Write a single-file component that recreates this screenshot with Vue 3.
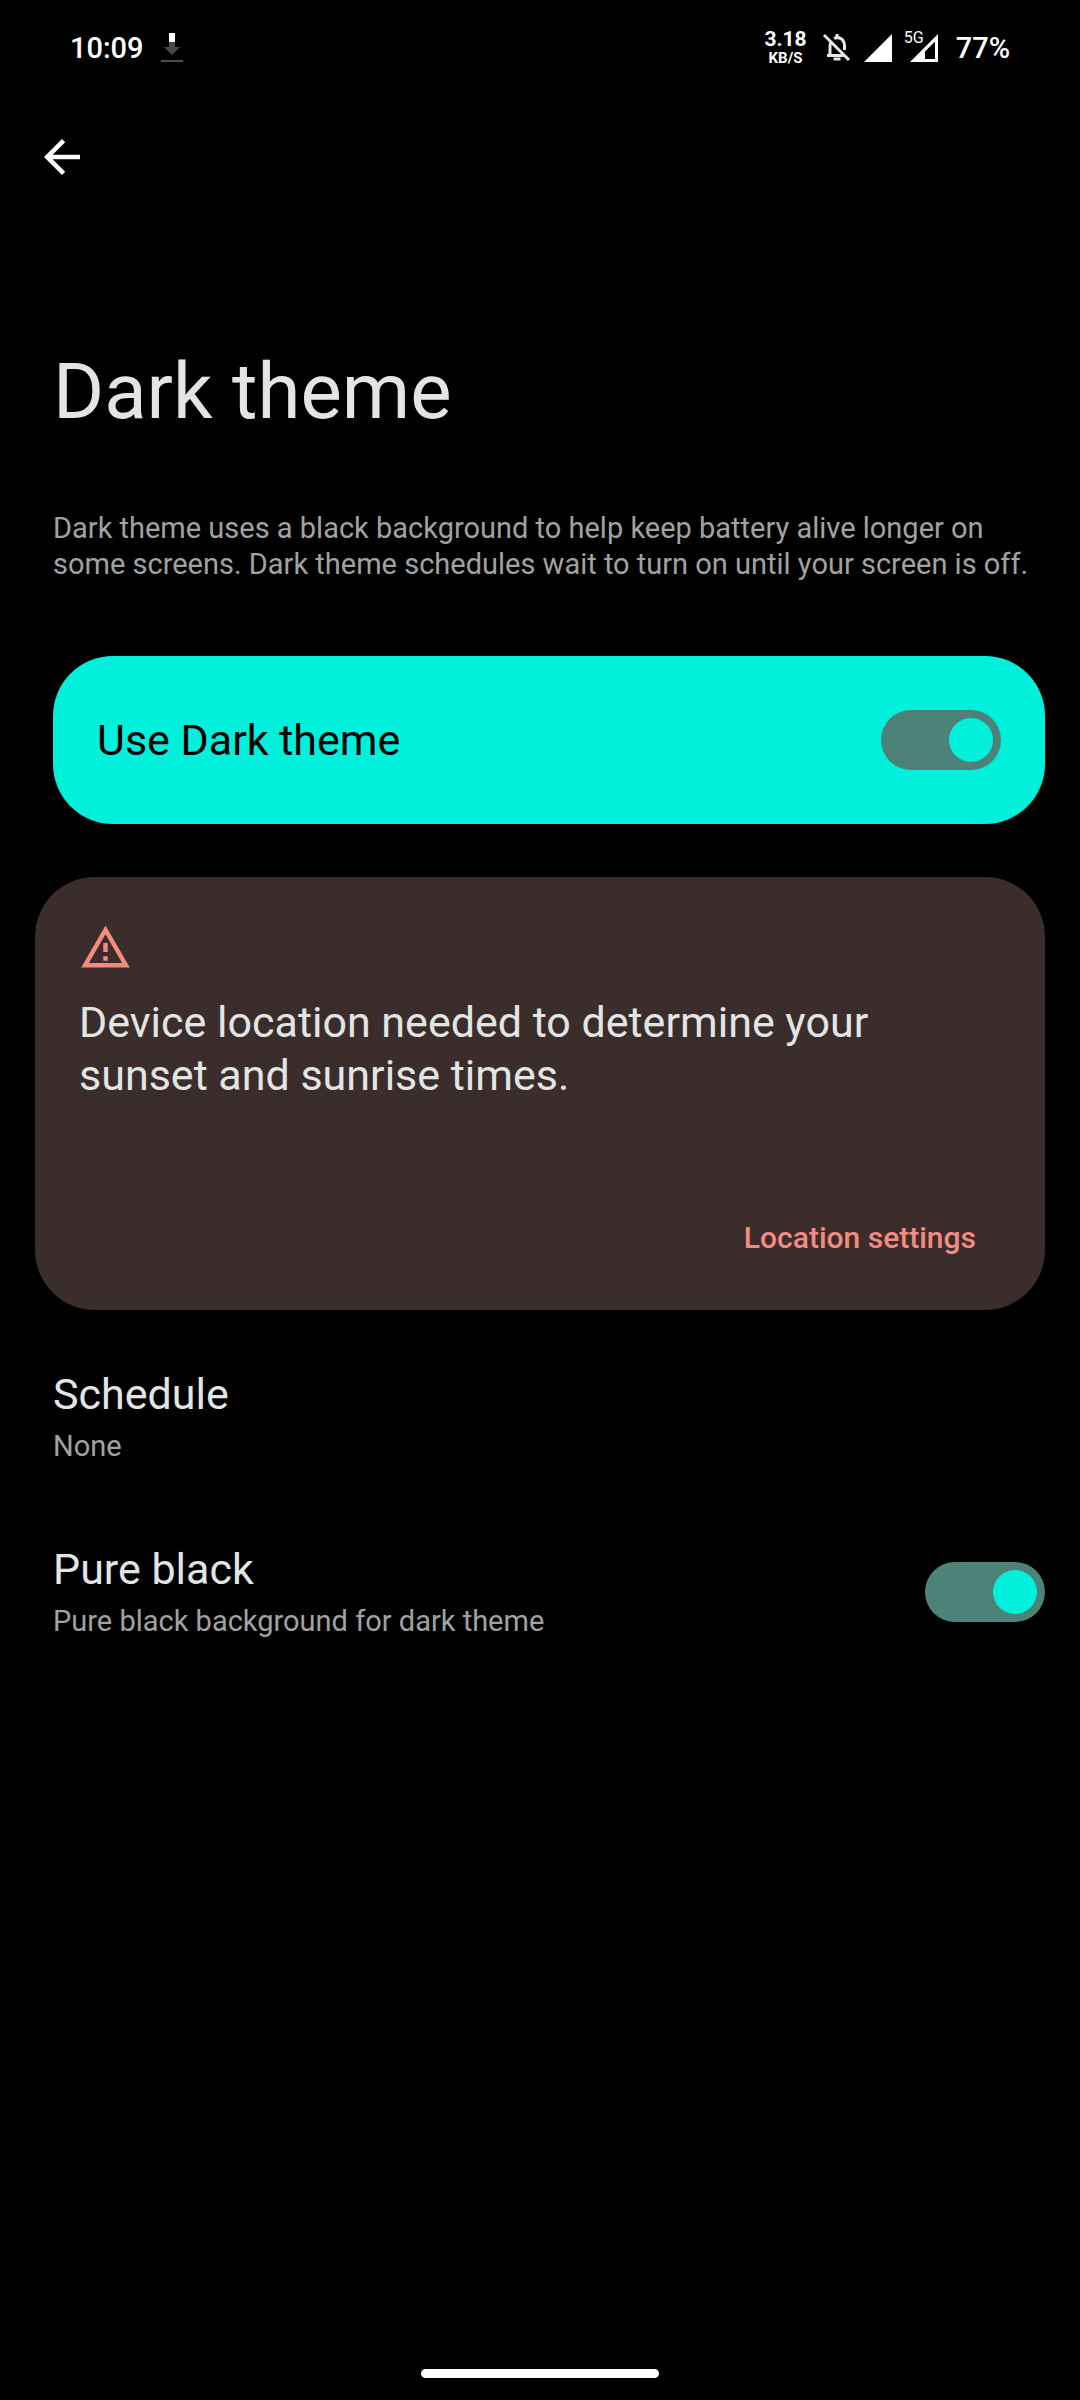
<script setup>
import { ref } from 'vue'

const darkTheme = ref(true)
const pureBlack = ref(true)
</script>

<template>
  <div class="screen">
    <header class="status-bar">
      <div class="status-group">
        <time class="status-text">10:09</time>
        <svg class="download" width="22" height="30" viewBox="0 0 22 30" aria-hidden="true">
          <path d="M8 9h6v5h5l-8 8-8-8h5z" fill="#4a4a4a" />
          <path d="M8 0h6v9H8z" fill="#fff" />
          <path d="M0 27h22v2H0z" fill="#4a4a4a" />
        </svg>
      </div>
      <div class="status-group">
        <div class="speed">
          <span class="speed-value">3.18</span>
          <span class="speed-unit">KB/S</span>
        </div>
        <svg class="bell" width="28" height="30" viewBox="0 0 28 30" fill="none" stroke="#e8e8e8" stroke-width="3" aria-hidden="true">
          <path d="M1 2l25 25" />
          <path d="M4 22.500h18M7 22V13c0-2 .6-3.600 1.600-5M11 5.500c5-2.500 10.500.8 10.500 7.500v4" />
          <path d="M14 1v4" />
          <path d="M10.500 26h7" />
        </svg>
        <svg class="signal" width="28" height="30" viewBox="0 0 28 30" aria-hidden="true">
          <path d="M28 1v28H0z" fill="#fff" />
        </svg>
        <div class="mobile">
          <span class="network">5G</span>
          <svg width="28" height="30" viewBox="0 0 28 30" aria-hidden="true">
            <path fill-rule="evenodd" d="M28 1v28H0zM25 8.500L15 18.500V26h10z" fill="#fff" />
          </svg>
        </div>
        <span class="status-text">77%</span>
      </div>
    </header>

    <nav class="toolbar">
      <button class="back" type="button" aria-label="Back">
        <svg width="54" height="54" viewBox="0 0 24 24" aria-hidden="true">
          <path d="M20 11H7.830l5.590-5.590L12 4l-8 8 8 8 1.410-1.410L7.830 13H20z" fill="#fff" />
        </svg>
      </button>
    </nav>

    <main class="content">
      <h1 class="title">Dark theme</h1>
      <p class="description">
        Dark theme uses a black background to help keep battery alive longer on
        some screens. Dark theme schedules wait to turn on until your screen is off.
      </p>

      <label class="main-switch">
        <span class="item-title">Use Dark theme</span>
        <input v-model="darkTheme" class="switch" type="checkbox" role="switch" />
      </label>

      <section class="notice">
        <svg class="warning" width="53" height="53" viewBox="0 0 24 24" aria-hidden="true">
          <path d="M12 5.990L19.530 19H4.470L12 5.990M12 2L1 21h22L12 2zm1 14h-2v2h2v-2zm0-6h-2v4h2v-4z" fill="#f48b81" />
        </svg>
        <p class="notice-text">Device location needed to determine your sunset and sunrise times.</p>
        <button class="notice-action" type="button">Location settings</button>
      </section>

      <button class="item" type="button">
        <span class="item-text">
          <span class="item-title">Schedule</span>
          <span class="item-summary">None</span>
        </span>
      </button>

      <label class="item">
        <span class="item-text">
          <span class="item-title">Pure black</span>
          <span class="item-summary">Pure black background for dark theme</span>
        </span>
        <input v-model="pureBlack" class="switch" type="checkbox" role="switch" />
      </label>
    </main>

    <footer class="gesture-bar"><span class="handle"></span></footer>
  </div>
</template>

<style>
body {
  background: #000;
}
</style>

<style scoped>
.screen {
  display: flex;
  flex-direction: column;
  box-sizing: border-box;
  min-height: 100vh;
  background: #000;
  color: #e1e6e5;
  font-family: Roboto, "Liberation Sans", sans-serif;
}

svg {
  display: block;
}

button {
  padding: 0;
  border: 0;
  background: none;
  color: inherit;
  font-family: inherit;
  text-align: left;
}

.status-bar {
  display: flex;
  align-items: center;
  justify-content: space-between;
  height: 96px;
  padding: 0 70px;
  color: #fff;
}

.status-group {
  display: flex;
  align-items: center;
}

.status-text {
  font-size: 29px;
  font-weight: 500;
  line-height: 36px;
}

.download {
  margin-left: 17px;
}

.speed {
  display: flex;
  flex-direction: column;
  align-items: center;
  font-weight: 700;
}

.speed-value {
  font-size: 21px;
  line-height: 20px;
}

.speed-unit {
  font-size: 15px;
  line-height: 18px;
}

.bell {
  margin-left: 16px;
}

.signal {
  margin: 0 18px 0 13px;
}

.mobile {
  position: relative;
  margin-right: 18px;
}

.network {
  position: absolute;
  top: -4px;
  left: -6px;
  font-size: 16px;
  line-height: 18px;
}

.toolbar {
  padding: 34px 35px 0;
}

.back {
  display: block;
}

.content {
  display: flex;
  flex-direction: column;
  padding: 160px 35px 0 53px;
}

.title {
  margin: 0 0 70px;
  font-size: 78px;
  font-weight: 400;
  line-height: 96px;
}

.description {
  margin: 0 0 74px;
  color: #9fa3a1;
  font-size: 29px;
  line-height: 36px;
}

.main-switch {
  display: flex;
  align-items: center;
  justify-content: space-between;
  min-height: 168px;
  padding: 0 44px;
  border-radius: 60px;
  background: #00f0dc;
  color: #000;
}

.notice {
  display: flex;
  flex-direction: column;
  margin: 53px 0 59px -18px;
  padding: 44px 44px 54px;
  border-radius: 60px;
  background: #3b2d2c;
}

.notice-text {
  margin: 22px 0 118px;
  padding-right: 44px;
  font-size: 43px;
  line-height: 53px;
}

.notice-action {
  align-self: flex-end;
  margin-right: 25px;
  color: #f48b81;
  font-size: 30px;
  font-weight: 500;
  line-height: 36px;
}

.item {
  display: flex;
  align-items: center;
  justify-content: space-between;
  margin-bottom: 80px;
}

.item-text {
  display: flex;
  flex-direction: column;
  gap: 9px;
}

.item-title {
  font-size: 43px;
  line-height: 50px;
}

.item-summary {
  color: #9fa3a1;
  font-size: 29px;
  line-height: 36px;
}

.switch {
  display: flex;
  flex: none;
  box-sizing: border-box;
  width: 120px;
  height: 60px;
  margin: 0;
  padding: 8px;
  border-radius: 30px;
  background: #4d8279;
  appearance: none;
}

.switch::before {
  width: 44px;
  height: 44px;
  border-radius: 50%;
  background: #00f0dc;
  content: "";
}

.switch:checked::before {
  margin-left: auto;
}

.gesture-bar {
  display: flex;
  justify-content: center;
  margin-top: auto;
  padding-bottom: 22px;
}

.handle {
  width: 238px;
  height: 9px;
  border-radius: 5px;
  background: #fff;
}
</style>
